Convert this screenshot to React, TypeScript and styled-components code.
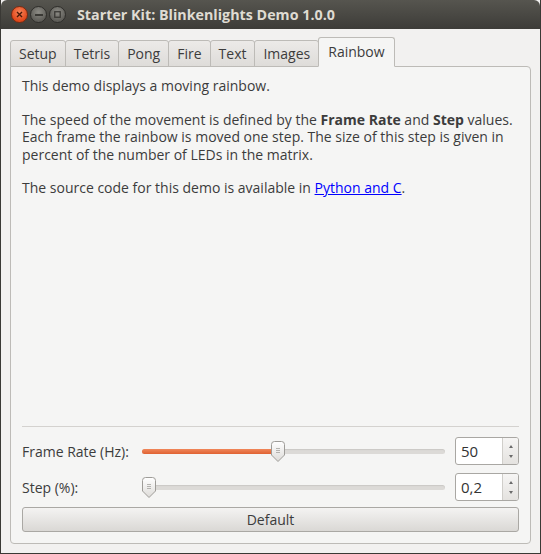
import React from 'react'
import styled, { createGlobalStyle } from 'styled-components'

const GlobalStyle = createGlobalStyle`
  html, body {
    margin: 0;
    padding: 0;
    background: #3c3b37;
  }
  body {
    font-family: "Open Sans", "DejaVu Sans", sans-serif;
    font-size: 14px;
    color: #3c3c3c;
  }
`

const Window = styled.div`
  width: 541px;
  height: 554px;
  box-sizing: border-box;
  display: flex;
  flex-direction: column;
  background: #f2f1f0;
  border: 1px solid #3a3935;
  border-top: none;
  overflow: hidden;
`

const TitleBar = styled.div`
  height: 29px;
  flex: none;
  display: flex;
  align-items: center;
  padding-left: 10px;
  background: linear-gradient(#56554f, #3d3c38);
  border-radius: 6px 6px 0 0;
`

const WinButtons = styled.div`
  display: flex;
  gap: 2px;
  margin-right: 11px;
`

const WinButton = styled.div<{ $close?: boolean }>`
  width: 17px;
  height: 17px;
  border-radius: 50%;
  display: flex;
  align-items: center;
  justify-content: center;
  box-sizing: border-box;
  border: 1px solid ${(p) => (p.$close ? '#7a2b12' : '#2f2e2b')};
  background: ${(p) =>
    p.$close
      ? 'radial-gradient(circle at 50% 35%, #f7845a, #e1481b 70%)'
      : 'radial-gradient(circle at 50% 35%, #8c8b85, #5f5e59 70%)'};
`

const Title = styled.div`
  font-weight: 700;
  font-size: 14.3px;
  color: #dfdbd2;
`

const Body = styled.div`
  flex: 1;
  display: flex;
  flex-direction: column;
  padding: 7px 9px 9px 9px;
`

const TabBar = styled.div`
  display: flex;
  align-items: flex-end;
  height: 30px;
  position: relative;
  z-index: 1;
`

const Tab = styled.div<{ $active?: boolean }>`
  height: ${(p) => (p.$active ? '30px' : '27px')};
  box-sizing: border-box;
  padding: 0 ${(p) => (p.$active ? '9px' : '8px')};
  padding-bottom: ${(p) => (p.$active ? '2px' : '0')};
  display: flex;
  align-items: center;
  font-size: 14px;
  color: #3c3c3c;
  border: 1px solid #bdbbb7;
  border-bottom-color: ${(p) => (p.$active ? '#f5f5f4' : '#bdbbb7')};
  margin-right: -1px;
  margin-bottom: -1px;
  border-radius: 3px 3px 0 0;
  background: ${(p) =>
    p.$active ? '#f5f5f4' : 'linear-gradient(#eceae8, #dedcd9)'};
`

const Panel = styled.div`
  flex: 1;
  display: flex;
  flex-direction: column;
  background: #f5f5f4;
  border: 1px solid #bdbbb7;
  border-radius: 0 4px 4px 4px;
  padding: 10px 11px 11px 11px;
`

const Text = styled.div`
  flex: 1;
  font-size: 14px;
  line-height: 17.5px;
  color: #3c3c3c;
`

const Para = styled.p`
  margin: 0 0 16px 0;
`

const Link = styled.a`
  color: #0000ff;
  text-decoration: underline;
`

const Separator = styled.div`
  height: 1px;
  background: #d4d2cf;
  margin: 0 0 10px 0;
`

const Rows = styled.div`
  display: flex;
  flex-direction: column;
  gap: 8px;
`

const Row = styled.div`
  display: flex;
  align-items: center;
  height: 28px;
`

const Label = styled.div`
  width: 118px;
  font-size: 14px;
  color: #3c3c3c;
  flex: none;
`

const SliderTrack = styled.div`
  flex: 1;
  height: 5px;
  border-radius: 3px;
  background: #dcdad7;
  box-shadow: inset 0 1px 1px rgba(0, 0, 0, 0.08);
  position: relative;
  margin: 0 10px 0 2px;
`

const SliderFill = styled.div`
  position: absolute;
  left: 0;
  top: 0;
  bottom: 0;
  border-radius: 3px;
  background: linear-gradient(#f0875a, #e06232);
`

const Handle = styled.svg`
  position: absolute;
  top: -8px;
  width: 14px;
  height: 21px;
  margin-left: -7px;
`

const Spin = styled.div`
  width: 64px;
  height: 28px;
  box-sizing: border-box;
  border: 1px solid #a9a7a3;
  border-radius: 3px;
  background: #ffffff;
  display: flex;
  flex: none;
`

const SpinValue = styled.div`
  flex: 1;
  display: flex;
  align-items: center;
  padding-left: 5px;
  font-size: 15px;
  color: #333;
`

const SpinArrows = styled.div`
  width: 15px;
  border-left: 1px solid #d0ceca;
  background: linear-gradient(#f6f5f4, #e4e2df);
  display: flex;
  flex-direction: column;
  align-items: center;
  justify-content: space-around;
  border-radius: 0 2px 2px 0;
  padding: 3px 0;
`

const Arrow = styled.div<{ $down?: boolean }>`
  width: 0;
  height: 0;
  border-left: 2px solid transparent;
  border-right: 2px solid transparent;
  ${(p) =>
    p.$down ? 'border-top: 3px solid #6a6a6a;' : 'border-bottom: 3px solid #6a6a6a;'}
`

const Button = styled.div`
  height: 25px;
  box-sizing: border-box;
  margin-top: 6px;
  border: 1px solid #aaa8a4;
  border-radius: 3px;
  background: linear-gradient(#f4f3f2, #dad8d5);
  display: flex;
  align-items: center;
  justify-content: center;
  font-size: 14px;
  color: #3c3c3c;
`

function SliderHandle({ pos }: { pos: string }) {
  return (
    <Handle style={{ left: pos }} viewBox="0 0 14 21">
      <defs>
        <linearGradient id="hg" x1="0" x2="0" y1="0" y2="1">
          <stop offset="0" stopColor="#ffffff" />
          <stop offset="1" stopColor="#dddbd8" />
        </linearGradient>
      </defs>
      <path
        d="M3.5 0.5 H10.5 Q13.5 0.5 13.5 3.5 V14 L7 20.5 L0.5 14 V3.5 Q0.5 0.5 3.5 0.5 Z"
        fill="url(#hg)"
        stroke="#9e9c98"
      />
      <path d="M5 7.5 H9 M5 9.5 H9 M5 11.5 H9" stroke="#a5a39f" strokeWidth="0.8" />
    </Handle>
  )
}

function SpinBox({ value }: { value: string }) {
  return (
    <Spin>
      <SpinValue>{value}</SpinValue>
      <SpinArrows>
        <Arrow />
        <Arrow $down />
      </SpinArrows>
    </Spin>
  )
}

const tabs = ['Setup', 'Tetris', 'Pong', 'Fire', 'Text', 'Images', 'Rainbow']

export default function App() {
  return (
    <>
      <GlobalStyle />
      <Window>
        <TitleBar>
          <WinButtons>
            <WinButton $close>
              <svg width="7" height="7" viewBox="0 0 7 7">
                <path d="M1 1 L6 6 M6 1 L1 6" stroke="#4a1a08" strokeWidth="1.4" />
              </svg>
            </WinButton>
            <WinButton>
              <svg width="8" height="2" viewBox="0 0 8 2">
                <rect width="8" height="2" fill="#3a3935" />
              </svg>
            </WinButton>
            <WinButton>
              <svg width="7" height="7" viewBox="0 0 7 7">
                <rect x="0.75" y="0.75" width="5.5" height="5.5" fill="none" stroke="#3a3935" strokeWidth="1.3" />
              </svg>
            </WinButton>
          </WinButtons>
          <Title>Starter Kit: Blinkenlights Demo 1.0.0</Title>
        </TitleBar>
        <Body>
          <TabBar>
            {tabs.map((t) => (
              <Tab key={t} $active={t === 'Rainbow'}>
                {t}
              </Tab>
            ))}
          </TabBar>
          <Panel>
            <Text>
              <Para>This demo displays a moving rainbow.</Para>
              <Para>
                The speed of the movement is defined by the <b>Frame Rate</b> and <b>Step</b> values.
                Each frame the rainbow is moved one step. The size of this step is given in
                percent of the number of LEDs in the matrix.
              </Para>
              <Para>
                The source code for this demo is available in <Link>Python and C</Link>.
              </Para>
            </Text>
            <Separator />
            <Rows>
              <Row>
                <Label>Frame Rate (Hz):</Label>
                <SliderTrack>
                  <SliderFill style={{ width: '45%' }} />
                  <SliderHandle pos="45%" />
                </SliderTrack>
                <SpinBox value="50" />
              </Row>
              <Row>
                <Label>Step (%):</Label>
                <SliderTrack>
                  <SliderHandle pos="7px" />
                </SliderTrack>
                <SpinBox value="0,2" />
              </Row>
            </Rows>
            <Button>Default</Button>
          </Panel>
        </Body>
      </Window>
    </>
  )
}
